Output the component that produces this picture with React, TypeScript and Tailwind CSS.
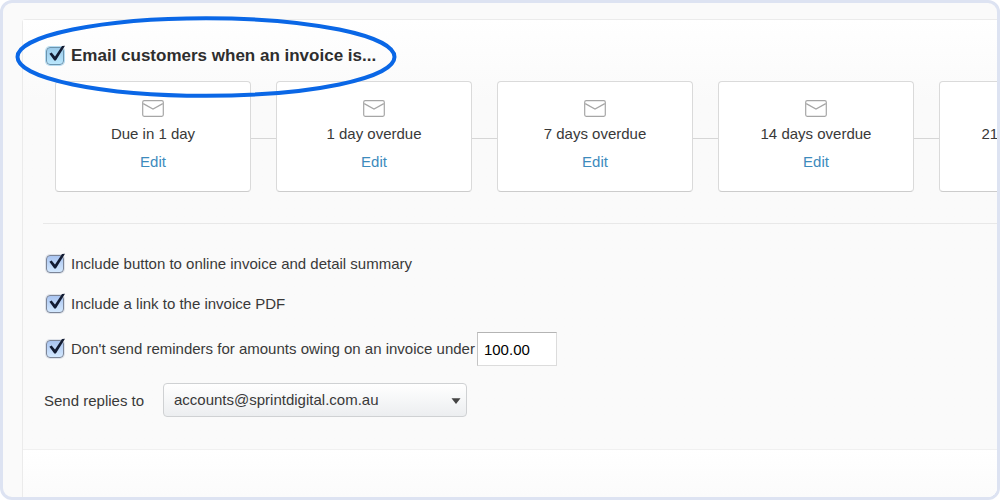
import { useState } from "react";

const REMINDERS = [
  "Due in 1 day",
  "1 day overdue",
  "7 days overdue",
  "14 days overdue",
  "21 days overdue",
];

interface TickBoxProps {
  id: string;
  highlighted?: boolean;
}

/** Native checkbox with a glossy face and a tick that pokes out of the box. */
function TickBox({ id, highlighted }: TickBoxProps) {
  return (
    <span className="relative size-[18px] shrink-0">
      <input
        id={id}
        type="checkbox"
        defaultChecked
        className={`peer block size-full appearance-none rounded-[4px] border ${
          highlighted
            ? "border-[#6c93ad] bg-linear-to-b from-[#9ccbea] to-[#b9e6fc] ring-1 ring-[#b5dcf2]"
            : "border-[#7c8597] bg-linear-to-b from-[#a9c4f0] to-[#d3e8fe] ring-1 ring-[#dfe3ea]"
        }`}
      />
      <svg
        viewBox="0 0 20 20"
        aria-hidden="true"
        className="pointer-events-none absolute -top-0.5 left-0 hidden size-5 peer-checked:block"
      >
        <path d="M3.400 8.700 5.600 7.400 9 11.400 16 1 19 .8 9.900 15.600H8.300Z" fill="#131c33" />
      </svg>
    </span>
  );
}

function EnvelopeIcon() {
  return (
    <svg viewBox="0 0 22 17" fill="none" stroke="#a6a6a6" strokeWidth="1.2" className="h-[17px] w-[22px]" aria-hidden="true">
      <rect x="0.7" y="0.7" width="20.6" height="15.6" rx="1.5" />
      <path d="M1.200 3.600 11 9l9.800-5.400" />
    </svg>
  );
}

function ReminderCard({ label }: { label: string }) {
  return (
    <li className="flex shrink-0 items-center">
      <div className="flex h-[111px] w-[196px] flex-col items-center rounded-[4px] border border-[#dadada] border-b-[#cccccc] bg-white pt-[18px]">
        <EnvelopeIcon />
        <p className="mt-[7px] whitespace-nowrap leading-5">{label}</p>
        <a href="#edit" className="mt-2 leading-5 text-[#3d8bbd]">
          Edit
        </a>
      </div>
      <span className="mt-1 h-px w-[25px] bg-[#d6d6d6]" />
    </li>
  );
}

export default function App() {
  const [minimum, setMinimum] = useState("100.00");

  return (
    <main className="flex min-h-screen flex-col overflow-hidden rounded-xl border-3 border-[#dde3f2] bg-[#fafafa] pl-[19px] pt-4 font-['Liberation_Sans',Arial,sans-serif] text-[15px] text-[#393939]">
      <form className="flex min-w-0 flex-1 flex-col rounded-tl-[4px] border-l border-t border-[#ebebeb] bg-white">
        <section className="border-b border-[#f0f0f0] bg-linear-to-b from-white to-[#fafafa] to-[80px] pb-8">
          <div className="relative pl-[23px] pt-6">
            <div className="flex items-center gap-[7px]">
              <TickBox id="email-customers" highlighted />
              <label htmlFor="email-customers" className="text-[17px] font-bold leading-6 text-[#2e2e2e]">
                Email customers when an invoice is...
              </label>
            </div>
            <svg
              viewBox="0 0 382 82"
              fill="none"
              aria-hidden="true"
              className="pointer-events-none absolute -left-2 -top-1 z-10 h-[82px] w-[382px]"
            >
              <ellipse cx="191" cy="41" rx="188.500" ry="38.800" stroke="#0a67e6" strokeWidth="4" />
            </svg>
          </div>

          <ul className="mt-[13px] flex pl-8">
            {REMINDERS.map((label) => (
              <ReminderCard key={label} label={label} />
            ))}
          </ul>

          <hr className="ml-5 mt-[31px] border-[#e8e8e8]" />

          <div className="mt-7 flex flex-col gap-4 pl-[23px]">
            <div className="flex items-center gap-[7px]">
              <TickBox id="include-button" />
              <label htmlFor="include-button" className="leading-6">
                Include button to online invoice and detail summary
              </label>
            </div>
            <div className="flex items-center gap-[7px]">
              <TickBox id="include-pdf" />
              <label htmlFor="include-pdf" className="leading-6">
                Include a link to the invoice PDF
              </label>
            </div>
            <div className="flex items-center">
              <TickBox id="minimum-on" />
              <label htmlFor="minimum-on" className="pl-[7px] pr-0.5">
                Don't send reminders for amounts owing on an invoice under
              </label>
              <input
                type="text"
                aria-label="Minimum amount"
                value={minimum}
                onChange={(e) => setMinimum(e.target.value)}
                className="h-[34px] w-20 border border-[#dcdcdc] border-l-[#c4c4c4] border-t-[#b4b4b4] bg-white px-1.5 text-black"
              />
            </div>
          </div>

          <div className="mt-[17px] flex items-center pl-[21px]">
            <label htmlFor="reply-to" className="w-[119px] pt-0.5">
              Send replies to
            </label>
            <div className="relative">
              <select
                id="reply-to"
                className="block h-[34px] w-[304px] appearance-none rounded-[4px] border border-[#cfd1d3] bg-linear-to-b from-white to-[#eceef0] pl-2.5 pr-8"
              >
                <option>accounts@sprintdigital.com.au</option>
              </select>
              <svg viewBox="0 0 10 6" aria-hidden="true" className="pointer-events-none absolute right-1.5 top-[15px] h-1.5 w-2.5">
                <path d="M.5.3h9L5 6Z" fill="#444" />
              </svg>
            </div>
          </div>
        </section>
        <div className="flex-1 bg-linear-to-b from-white to-[#fbfbfb]" />
      </form>
    </main>
  );
}
